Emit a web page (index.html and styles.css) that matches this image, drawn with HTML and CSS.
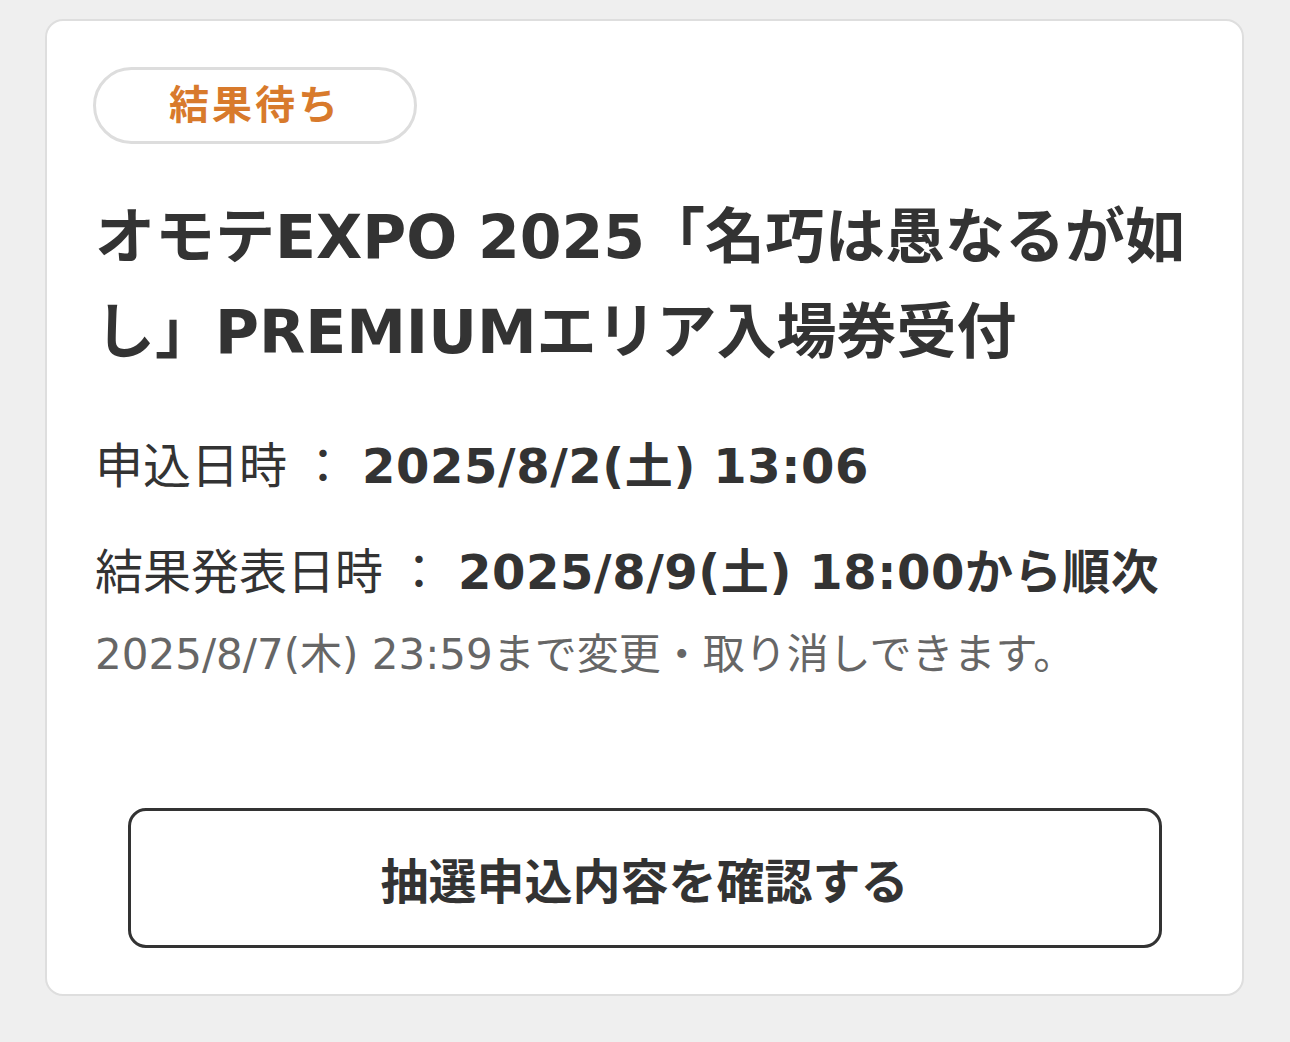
FILE: index.html
```html
<!DOCTYPE html>
<html lang="ja">
<head>
<meta charset="utf-8">
<title>抽選申込</title>
<link rel="stylesheet" href="styles.css">
</head>
<body>
<div class="card">
  <span class="badge">結果待ち</span>
  <h1 class="title">オモテEXPO 2025「名巧は愚なるが如し」PREMIUMエリア入場券受付</h1>
  <div class="info">
    <div class="row">
      <span class="label">申込日時</span><span class="colon">：</span><span class="value">2025/8/2(土) 13:06</span>
    </div>
    <div class="row">
      <span class="label">結果発表日時</span><span class="colon">：</span><span class="value">2025/8/9(土) 18:00から順次</span>
    </div>
  </div>
  <p class="note">2025/8/7(木) 23:59まで変更・取り消しできます。</p>
  <button class="confirm" type="button">抽選申込内容を確認する</button>
</div>
</body>
</html>
```

FILE: styles.css
```css
html, body {
  margin: 0;
  padding: 0;
  background: #efefef;
}

body {
  font-family: "DejaVu Sans", "Noto Sans CJK JP", sans-serif;
  color: #333333;
  padding: 19px 46px 46px 45px;
}

.card {
  display: flex;
  flex-direction: column;
  align-items: flex-start;
  background: #ffffff;
  border: 2px solid #dedede;
  border-radius: 18px;
  padding: 46px 48px 46px 48px;
}

.badge {
  display: block;
  margin-left: -2px;
  border: 3px solid #dddddd;
  border-radius: 40px;
  padding: 0 73px;
  line-height: 71px;
  font-size: 40px;
  font-weight: 700;
  letter-spacing: 3px;
  color: #d87a2c;
}

.title {
  margin: 46px 0 0;
  font-size: 60px;
  font-weight: 700;
  line-height: 95px;
  color: #333333;
}

.info {
  margin-top: 50px;
  display: flex;
  flex-direction: column;
  gap: 34px;
}

.row {
  display: flex;
  align-items: baseline;
  line-height: 72px;
  font-size: 48px;
}

.label {
  font-weight: 400;
}

.colon {
  margin: 0 15px 0 12px;
}

.value {
  font-weight: 700;
  letter-spacing: 0.6px;
}

.note {
  margin: 20px 0 0;
  font-size: 42px;
  line-height: 54px;
  color: #666666;
}

.confirm {
  align-self: center;
  margin-top: 126px;
  width: 1034px;
  height: 140px;
  box-sizing: border-box;
  background: #ffffff;
  border: 3px solid #333333;
  border-radius: 18px;
  font-family: inherit;
  font-size: 48px;
  font-weight: 700;
  color: #333333;
  padding: 0;
  cursor: pointer;
}
```
